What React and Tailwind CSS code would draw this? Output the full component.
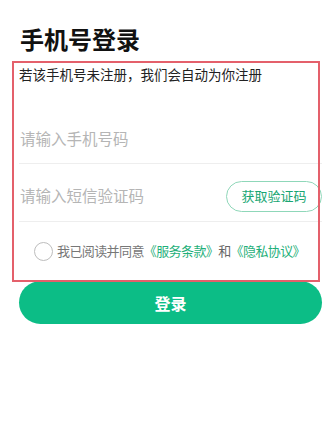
export default function App() {
  return (
    <div className="relative w-[335px] h-[424px] bg-white font-['Noto_Sans_CJK_SC','Noto_Sans',sans-serif] overflow-hidden">
      <div className="flex flex-col pl-[19px] pr-[13px] pt-[27px]">
        <h1 className="text-[24px] leading-[24px] font-bold text-[#111] pl-[1px]">手机号登录</h1>
        <p className="mt-[13px] text-[13.5px] leading-[20px] text-[#222]">若该手机号未注册，我们会自动为你注册</p>
        <div className="mt-[30px] h-[50px] flex items-center border-b border-[#eeeeee]">
          <span className="text-[15.5px] text-[#b5b5b5] pl-[1px]">请输入手机号码</span>
        </div>
        <div className="h-[58px] pt-[7px] flex items-center justify-between border-b border-[#eeeeee]">
          <span className="text-[15.5px] text-[#b5b5b5] pl-[1px]">请输入短信验证码</span>
          <button className="w-[96px] h-[31px] rounded-full border border-[#8fd7b9] text-[13px] text-[#17a672] flex items-center justify-center">获取验证码</button>
        </div>
        <div className="mt-[19px] h-[20px] flex items-center justify-center text-[13px] tracking-[-0.6px] pr-[2px]">
          <span className="w-[19px] h-[19px] rounded-full border border-[#bdbdbd] mr-[4px] shrink-0"></span>
          <span className="text-[#777]">我已阅读并同意</span>
          <span className="text-[#1fb07a]">《服务条款》</span>
          <span className="text-[#666]">和</span>
          <span className="text-[#1fb07a]">《隐私协议》</span>
        </div>
        <button className="mt-[20px] h-[43px] rounded-full bg-[#0cbd86] text-white text-[16px] font-bold flex items-center justify-center">登录</button>
      </div>
      <div className="absolute left-[12px] top-[61px] w-[308px] h-[221px] border-2 border-[#e4606b] pointer-events-none"></div>
    </div>
  );
}
